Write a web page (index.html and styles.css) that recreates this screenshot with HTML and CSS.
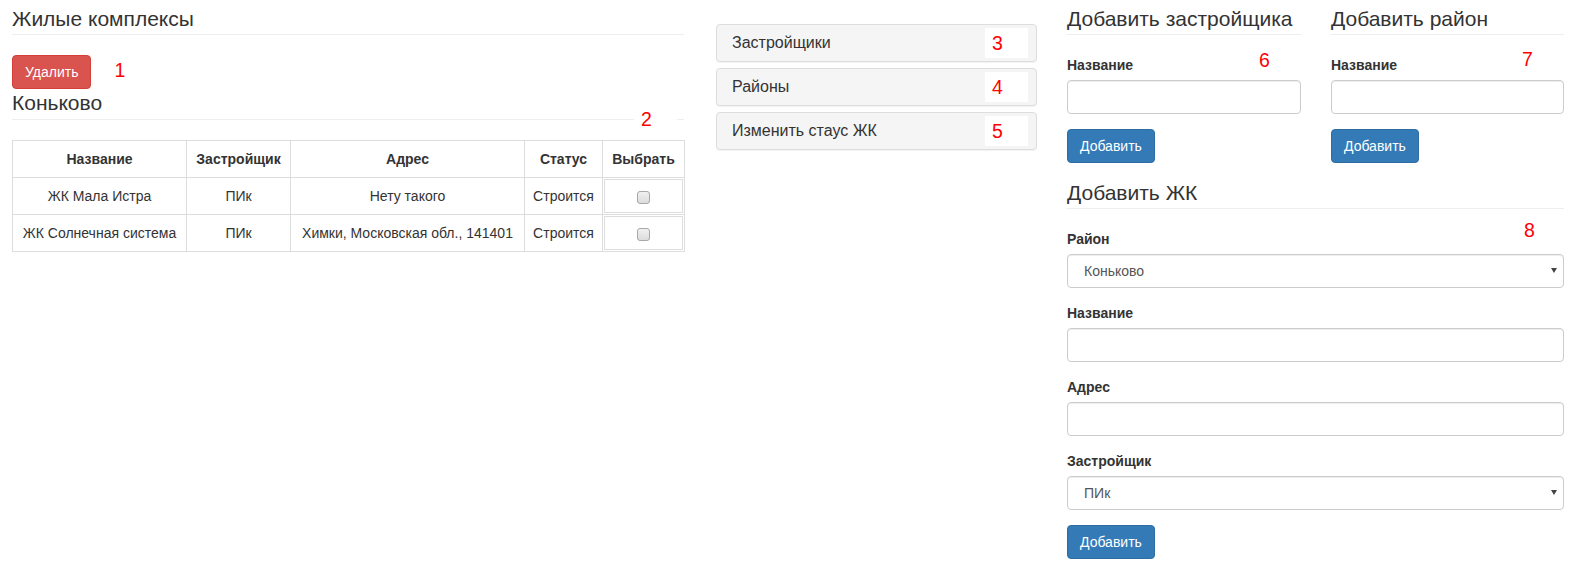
FILE: index.html
```html
<!DOCTYPE html>
<html lang="ru">
<head>
<meta charset="utf-8">
<title>Жилые комплексы</title>
<link rel="stylesheet" href="styles.css">
</head>
<body>
<div class="page">
  <section class="col-left">
    <h3 class="page-title">Жилые комплексы</h3>
    <div class="toolbar">
      <button class="btn btn-danger">Удалить</button>
      <span class="mark">1</span>
    </div>
    <h3 class="page-title district">Коньково<span class="mark mark-2">2</span></h3>
    <table class="grid">
      <colgroup>
        <col class="c1"><col class="c2"><col class="c3"><col class="c4"><col class="c5">
      </colgroup>
      <thead>
        <tr><th>Название</th><th>Застройщик</th><th>Адрес</th><th>Статус</th><th>Выбрать</th></tr>
      </thead>
      <tbody>
        <tr>
          <td>ЖК Мала Истра</td><td>ПИк</td><td>Нету такого</td><td>Строится</td>
          <td class="check"><div class="check-box"><input type="checkbox" class="cb"></div></td>
        </tr>
        <tr>
          <td>ЖК Солнечная система</td><td>ПИк</td><td>Химки, Московская обл., 141401</td><td>Строится</td>
          <td class="check"><div class="check-box"><input type="checkbox" class="cb"></div></td>
        </tr>
      </tbody>
    </table>
  </section>

  <section class="col-mid">
    <div class="panel"><span class="panel-title">Застройщики</span><span class="mark-box">3</span></div>
    <div class="panel"><span class="panel-title">Районы</span><span class="mark-box">4</span></div>
    <div class="panel"><span class="panel-title">Изменить стаус ЖК</span><span class="mark-box">5</span></div>
  </section>

  <section class="col-right">
    <div class="halves">
      <div class="half">
        <h3 class="page-title">Добавить застройщика</h3>
        <div class="form-group">
          <label class="lbl">Название</label>
          <span class="mark mark-6">6</span>
          <input type="text" class="form-control">
        </div>
        <button class="btn btn-primary">Добавить</button>
      </div>
      <div class="half">
        <h3 class="page-title">Добавить район</h3>
        <div class="form-group">
          <label class="lbl">Название</label>
          <span class="mark mark-7">7</span>
          <input type="text" class="form-control">
        </div>
        <button class="btn btn-primary">Добавить</button>
      </div>
    </div>

    <h3 class="page-title jk-title">Добавить ЖК</h3>
    <div class="form-group">
      <label class="lbl">Район</label>
      <span class="mark mark-8">8</span>
      <div class="select-wrap">
        <select class="form-control select"><option>Коньково</option></select>
      </div>
    </div>
    <div class="form-group">
      <label class="lbl">Название</label>
      <input type="text" class="form-control">
    </div>
    <div class="form-group">
      <label class="lbl">Адрес</label>
      <input type="text" class="form-control">
    </div>
    <div class="form-group">
      <label class="lbl">Застройщик</label>
      <div class="select-wrap">
        <select class="form-control select"><option>ПИк</option></select>
      </div>
    </div>
    <button class="btn btn-primary">Добавить</button>
  </section>
</div>
</body>
</html>
```

FILE: styles.css
```css
* { box-sizing: border-box; }

html, body {
  margin: 0;
  padding: 0;
  background: #fff;
}

body {
  font-family: "Liberation Sans", Arial, sans-serif;
  font-size: 14px;
  line-height: 20px;
  color: #333;
}

.page {
  display: flex;
  align-items: flex-start;
  padding: 8px 0 0 12px;
}

.col-left { width: 672px; flex: none; }
.col-mid { width: 321px; flex: none; margin-left: 32px; margin-top: 16px; }
.col-right { width: 497px; flex: none; margin-left: 30px; }

.page-title {
  margin: 0;
  font-size: 21px;
  font-weight: normal;
  line-height: 22px;
  padding-bottom: 4px;
  border-bottom: 1px solid #eee;
  color: #333;
}

.toolbar {
  display: flex;
  align-items: center;
  margin-top: 20px;
}

.district {
  position: relative;
  margin-top: 3px;
  padding-bottom: 5px;
}

.mark {
  font-family: "Liberation Sans", Arial, sans-serif;
  font-size: 19.5px;
  line-height: 1;
  color: #f00;
}

.toolbar .mark { margin-left: 23px; margin-top: -3px; }

.mark-2 {
  position: absolute;
  left: 622px;
  top: 18px;
  width: 43px;
  padding-left: 7px;
  background: #fff;
}

.btn {
  display: inline-block;
  font-family: "Liberation Sans", Arial, sans-serif;
  font-size: 14px;
  line-height: 20px;
  padding: 6px 12px;
  border: 1px solid transparent;
  border-radius: 4px;
  color: #fff;
  cursor: pointer;
}

.btn-danger { background: #d9534f; border-color: #d43f3a; }
.btn-primary { background: #337ab7; border-color: #2e6da4; }

.grid {
  margin-top: 20px;
  width: 672px;
  border-collapse: collapse;
  table-layout: fixed;
  border: 1px solid #ddd;
}

.grid .c1 { width: 174px; }
.grid .c2 { width: 104px; }
.grid .c3 { width: 234px; }
.grid .c4 { width: 78px; }
.grid .c5 { width: 82px; }

.grid th, .grid td {
  border: 1px solid #ddd;
  padding: 8px;
  text-align: center;
  line-height: 20px;
  white-space: nowrap;
}

.grid th { font-weight: bold; }

.grid td.check { padding: 1px; }

.check-box {
  height: 34px;
  border: 1px solid #ddd;
  display: flex;
  align-items: center;
  justify-content: center;
  padding-top: 2px;
}

.cb {
  appearance: none;
  -webkit-appearance: none;
  width: 13px;
  height: 13px;
  margin: 0;
  border: 1px solid #a8a8a8;
  border-radius: 3px;
  background: linear-gradient(#f0f0f0, #dcdcdc);
}

.panel {
  height: 38px;
  display: flex;
  align-items: center;
  padding: 0 8px 0 15px;
  background: #f5f5f5;
  border: 1px solid #ddd;
  border-radius: 4px;
  box-shadow: 0 1px 1px rgba(0, 0, 0, .05);
}

.panel + .panel { margin-top: 6px; }

.panel-title {
  flex: 1;
  font-size: 16px;
  line-height: 18px;
  color: #333;
}

.mark-box {
  width: 43px;
  height: 30px;
  padding-left: 7px;
  background: #fff;
  color: #f00;
  font-size: 19.5px;
  line-height: 30px;
}

.halves {
  display: grid;
  grid-template-columns: 234px 233px;
  column-gap: 30px;
}

.form-group {
  position: relative;
  margin-top: 20px;
  margin-bottom: 15px;
}

.form-group + .form-group { margin-top: 0; }

.lbl {
  display: block;
  font-weight: bold;
  margin-bottom: 5px;
}

.mark-6 { position: absolute; left: 192px; top: -4px; }
.mark-7 { position: absolute; left: 191px; top: -5px; }
.mark-8 { position: absolute; left: 457px; top: -8px; }

.form-control {
  display: block;
  width: 100%;
  height: 34px;
  padding: 6px 12px;
  font-family: "Liberation Sans", Arial, sans-serif;
  font-size: 14px;
  line-height: 20px;
  color: #555;
  background: #fff;
  border: 1px solid #ccc;
  border-radius: 4px;
  box-shadow: inset 0 1px 1px rgba(0, 0, 0, .075);
}

.jk-title { margin-top: 19px; }

.select-wrap { position: relative; }

.select {
  appearance: none;
  -webkit-appearance: none;
  padding: 0 16px;
}

.select-wrap::after {
  content: "";
  position: absolute;
  right: 7px;
  top: 14px;
  width: 0;
  height: 0;
  border-left: 3px solid transparent;
  border-right: 3px solid transparent;
  border-top: 5px solid #444;
  pointer-events: none;
}
```
